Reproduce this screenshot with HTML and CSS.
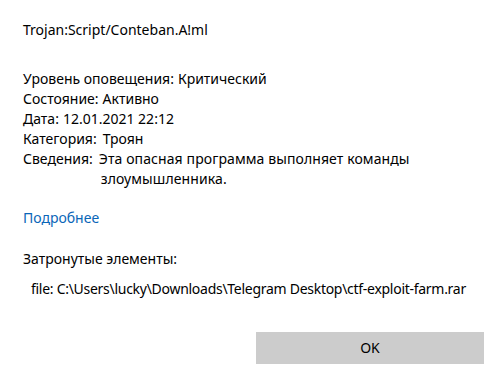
FILE: index.html
```html
<!DOCTYPE html>
<html lang="ru">
<head>
<meta charset="utf-8">
<link rel="stylesheet" href="styles.css">
</head>
<body>
<div class="dialog">
  <div class="title">Trojan:Script/Conteban.A!ml</div>
  <div class="info">
    <div class="row"><span class="label">Уровень оповещения:</span><span class="value">Критический</span></div>
    <div class="row"><span class="label">Состояние:</span><span class="value">Активно</span></div>
    <div class="row"><span class="label">Дата:</span><span class="value">12.01.2021 22:12</span></div>
    <div class="row"><span class="label">Категория:</span><span class="value wide">Троян</span></div>
    <div class="row"><span class="label">Сведения:</span><span class="value wide desc">Эта опасная программа выполняет команды злоумышленника.</span></div>
  </div>
  <a class="more" href="#">Подробнее</a>
  <div class="affected">Затронутые элементы:</div>
  <div class="file">file: C:\Users\lucky\Downloads\Telegram Desktop\ctf-exploit-farm.rar</div>
  <div class="actions"><button class="ok">OK</button></div>
</div>
</body>
</html>
```

FILE: styles.css
```css
html, body {
  margin: 0;
  padding: 0;
  background: #ffffff;
}
body {
  font-family: "Noto Sans", "Open Sans", sans-serif;
  font-size: 14px;
  line-height: 20px;
  color: #000000;
}
.dialog {
  width: 498px;
  height: 375px;
  box-sizing: border-box;
  padding: 20px 14px 0 23px;
  display: flex;
  flex-direction: column;
  align-items: flex-start;
}
.title {
  height: 20px;
}
.info {
  margin-top: 29px;
  display: flex;
  flex-direction: column;
}
.row {
  display: flex;
  align-items: flex-start;
}
.value {
  margin-left: 4px;
}
.value.wide {
  margin-left: 6px;
}
.desc {
  width: 330px;
  padding-left: 2px;
  text-indent: -2px;
  letter-spacing: 0.1px;
}
.more {
  margin-top: 19px;
  color: #0a66b8;
  text-decoration: none;
}
.affected {
  margin-top: 21px;
}
.file {
  margin-top: 10px;
  margin-left: 8px;
  white-space: nowrap;
  letter-spacing: -0.28px;
}
.actions {
  align-self: stretch;
  display: flex;
  justify-content: flex-end;
  margin-top: 33px;
}
.ok {
  width: 228px;
  height: 32px;
  border: none;
  background: #cccccc;
  font-family: inherit;
  font-size: 14px;
  line-height: 20px;
  color: #000000;
  padding: 0;
}
```
